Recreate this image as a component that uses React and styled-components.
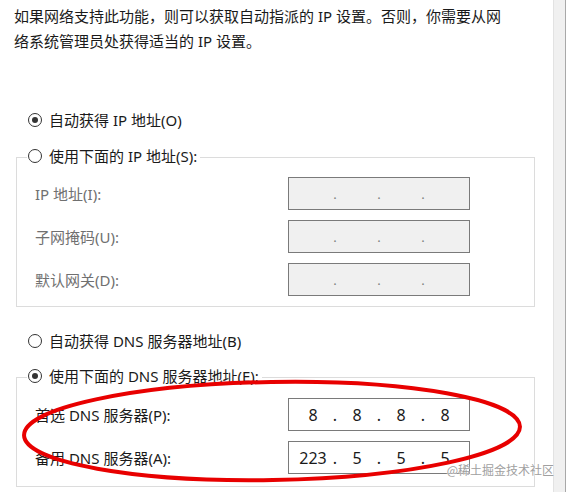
import React from "react";
import styled, { createGlobalStyle } from "styled-components";

const GlobalStyle = createGlobalStyle`
  html, body {
    margin: 0;
    padding: 0;
    background: #fff;
  }
  body {
    width: 567px;
    height: 492px;
    overflow: hidden;
    font-family: "Noto Sans", "Noto Sans CJK SC", sans-serif;
    color: #1a1a1a;
  }
`;

const ipv4 = [
  { label: "IP 地址(I):", value: null },
  { label: "子网掩码(U):", value: null },
  { label: "默认网关(D):", value: null },
];

const dns = [
  { label: "首选 DNS 服务器(P):", value: ["8", "8", "8", "8"] },
  { label: "备用 DNS 服务器(A):", value: ["223", "5", "5", "5"] },
];

function Radio({ checked, children }) {
  return (
    <>
      <Circle $checked={checked} />
      <span>{children}</span>
    </>
  );
}

function IpField({ value }) {
  const parts = value || ["", "", "", ""];
  return (
    <IpBox $disabled={!value}>
      {parts.map((p, i) => (
        <React.Fragment key={i}>
          <Octet>{p}</Octet>
          {i < 3 && <Dot $disabled={!value}>.</Dot>}
        </React.Fragment>
      ))}
    </IpBox>
  );
}

export default function App() {
  return (
    <Page>
      <GlobalStyle />
      <Main>
        <Intro>
          如果网络支持此功能，则可以获取自动指派的 IP 设置。否则，你需要从网
          <br />
          络系统管理员处获得适当的 IP 设置。
        </Intro>

        <RadioRow $top={55}>
          <Radio checked>自动获得 IP 地址(O)</Radio>
        </RadioRow>

        <Group $top={12}>
          <Legend>
            <Radio>使用下面的 IP 地址(S):</Radio>
          </Legend>
          <Rows $pt={8} $pb={10}>
            {ipv4.map((r) => (
              <React.Fragment key={r.label}>
                <Label $disabled>{r.label}</Label>
                <IpField value={r.value} />
              </React.Fragment>
            ))}
          </Rows>
        </Group>

        <RadioRow $top={23}>
          <Radio>自动获得 DNS 服务器地址(B)</Radio>
        </RadioRow>

        <Group $top={11}>
          <Legend>
            <Radio checked>使用下面的 DNS 服务器地址(E):</Radio>
          </Legend>
          <Rows $pt={9} $pb={12}>
            {dns.map((r) => (
              <React.Fragment key={r.label}>
                <Label>{r.label}</Label>
                <IpField value={r.value} />
              </React.Fragment>
            ))}
          </Rows>
        </Group>
      </Main>
      <Scrollbar />

      {/* red annotation circled over the dns fields */}
      <Annotation width="567" height="492" viewBox="0 0 567 492">
        <ellipse
          cx="272"
          cy="431"
          rx="248"
          ry="49"
          transform="rotate(-1 272 431)"
          fill="none"
          stroke="#e80000"
          strokeWidth="4"
        />
      </Annotation>
      <Watermark>@稀土掘金技术社区</Watermark>
    </Page>
  );
}

const Page = styled.div`
  position: relative;
  display: flex;
  width: 567px;
  height: 492px;
`;

const Main = styled.div`
  flex: 1;
  padding: 4px 18px 0 14px;
`;

const Scrollbar = styled.div`
  width: 11px;
  margin-right: 1px;
  background: #f0f0f0;
  border-left: 1px solid #e2e2e2;
  border-right: 1px solid #a8a8a8;
`;

const Intro = styled.p`
  margin: 0;
  font-size: 15px;
  line-height: 25px;
  white-space: nowrap;
`;

const RadioRow = styled.div`
  box-sizing: border-box;
  display: flex;
  align-items: center;
  gap: 7px;
  height: 24px;
  margin-top: ${(p) => p.$top}px;
  padding: 0 0 3px 14px;
  font-size: 15px;
`;

const Circle = styled.span`
  position: relative;
  box-sizing: border-box;
  width: 14px;
  height: 14px;
  border: 1px solid #333;
  border-radius: 50%;
  background: #fff;
  flex: none;

  &::after {
    content: "";
    display: ${(p) => (p.$checked ? "block" : "none")};
    position: absolute;
    left: 3px;
    top: 3px;
    width: 6px;
    height: 6px;
    border-radius: 50%;
    background: #333;
  }
`;

const Group = styled.fieldset`
  box-sizing: border-box;
  width: 519px;
  margin: ${(p) => p.$top}px 0 0 2px;
  padding: 0;
  border: 1px solid #dcdcdc;
  min-inline-size: 0;
`;

const Legend = styled.legend`
  box-sizing: border-box;
  display: flex;
  align-items: center;
  gap: 7px;
  height: 24px;
  margin-left: 10px;
  padding: 0 3px 3px 1px;
  font-size: 15px;
  background: #fff;
`;

const Rows = styled.div`
  display: grid;
  grid-template-columns: 253px 182px;
  grid-auto-rows: 33px;
  row-gap: 10px;
  padding: ${(p) => p.$pt}px 0 ${(p) => p.$pb}px 18px;
`;

const Label = styled.span`
  align-self: center;
  font-size: 15px;
  color: ${(p) => (p.$disabled ? "#707070" : "#1a1a1a")};
`;

const IpBox = styled.div`
  box-sizing: border-box;
  display: flex;
  align-items: center;
  height: 33px;
  padding-left: 6px;
  border: 1px solid #7a7a7a;
  background: ${(p) => (p.$disabled ? "#f0f0f0" : "#fff")};
  font-size: 16px;
`;

const Octet = styled.span`
  width: 36px;
  text-align: center;
`;

const Dot = styled.span`
  width: 8px;
  text-align: center;
  color: ${(p) => (p.$disabled ? "#808080" : "#1a1a1a")};
  font-size: ${(p) => (p.$disabled ? "13px" : "16px")};
`;

const Annotation = styled.svg`
  position: absolute;
  left: 0;
  top: 0;
  pointer-events: none;
`;

const Watermark = styled.div`
  position: absolute;
  right: 13px;
  top: 461px;
  font-family: "Noto Sans CJK SC", sans-serif;
  font-size: 12px;
  line-height: 18px;
  color: #a0a0a0;
  text-shadow: 0 0 2px #fff, 0 0 1px #fff;
`;
